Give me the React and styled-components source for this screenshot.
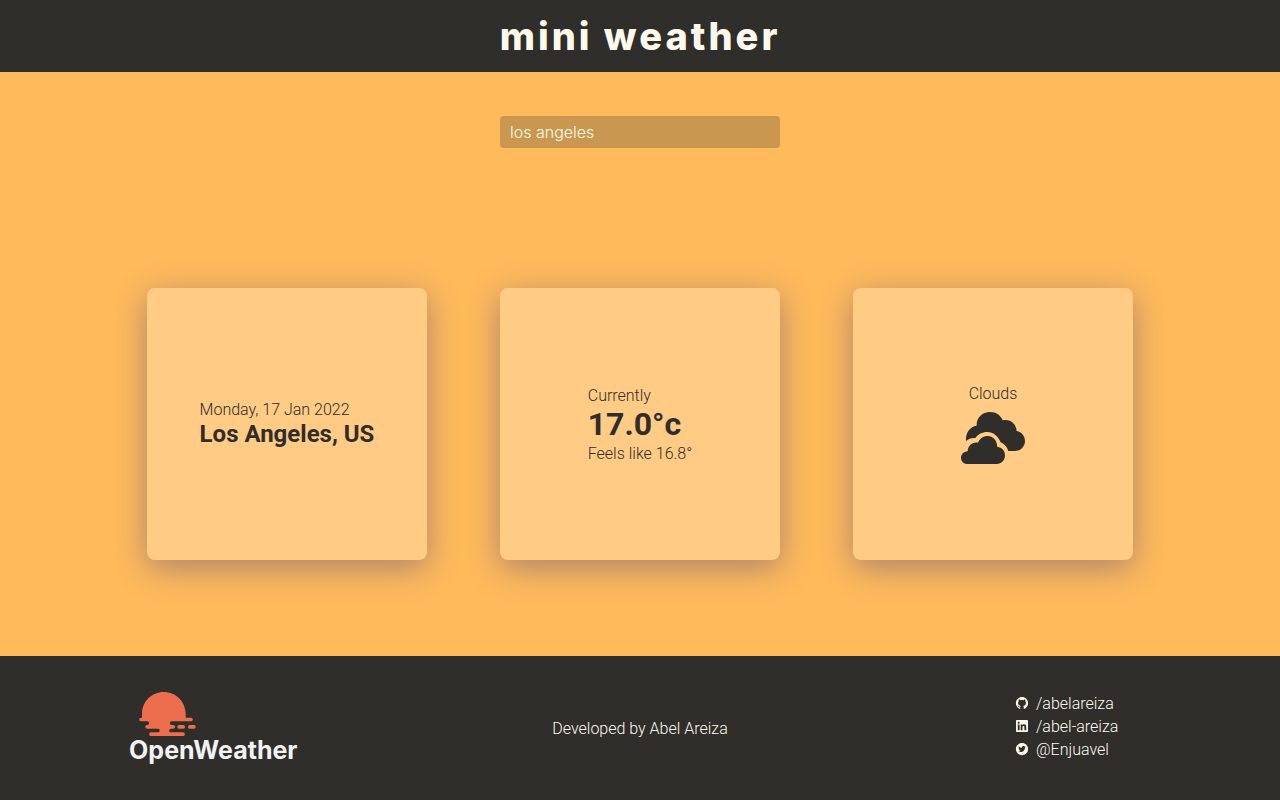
import React, { useState } from "react";
import styled, { createGlobalStyle } from "styled-components";
import { AiFillGithub, AiFillTwitterCircle } from "react-icons/ai";

const GlobalStyle = createGlobalStyle`
  * {
    box-sizing: border-box;
    margin: 0;
    padding: 0;
  }
  body {
    font-family: Roboto, "Liberation Sans", sans-serif;
    font-size: 16px;
    font-weight: 300;
    color: #2f2e2a;
    background: #ffba5c;
  }
`;

const Page = styled.div`
  display: flex;
  flex-direction: column;
  min-height: 100vh;
`;

const Header = styled.header`
  display: flex;
  align-items: center;
  justify-content: center;
  min-height: 72px;
  background: #2f2e2a;
`;

const Title = styled.h1`
  font-family: Inter, "Liberation Sans", sans-serif;
  font-size: 38px;
  font-weight: 800;
  line-height: 44px;
  letter-spacing: 3px;
  color: #fef9ec;
`;

const Main = styled.main`
  display: flex;
  flex: 1;
  flex-direction: column;
`;

const Search = styled.form`
  display: flex;
  align-items: center;
  justify-content: center;
  height: 120px;
`;

const SearchInput = styled.input`
  width: 280px;
  height: 32px;
  padding: 0 10px;
  border: 0;
  border-radius: 4px;
  outline: 0;
  font-family: Inter, "Liberation Sans", sans-serif;
  font-size: 16px;
  font-weight: 300;
  color: #fef9ec;
  background: #c9974f;
`;

const Cards = styled.section`
  display: flex;
  flex: 1;
  flex-wrap: wrap;
  align-items: center;
  justify-content: center;
  gap: 73px;
`;

const Card = styled.article`
  display: flex;
  align-items: center;
  justify-content: center;
  width: 280px;
  height: 272px;
  border-radius: 8px;
  background: rgba(255, 255, 255, 0.25);
  box-shadow: 0 8px 32px 0 rgba(31, 38, 135, 0.37);
`;

const CardBody = styled.div`
  display: flex;
  flex-direction: column;
  align-items: ${({ $centered }) => ($centered ? "center" : "flex-start")};
  gap: ${({ $centered }) => ($centered ? "9px" : "1px")};
`;

const Label = styled.p`
  line-height: 19px;
`;

const City = styled.h2`
  font-size: 24px;
  font-weight: 700;
  line-height: 28px;
`;

const Temperature = styled.h2`
  font-size: 32px;
  font-weight: 700;
  line-height: 37px;
`;

const Footer = styled.footer`
  display: grid;
  grid-template-columns: repeat(3, 1fr);
  align-items: center;
  justify-items: center;
  min-height: 144px;
  color: #fef9ec;
  background: #2f2e2a;
`;

const Logo = styled.a`
  display: flex;
  flex-direction: column;
  color: #f2f2f2;
  text-decoration: none;
`;

const LogoSun = styled.svg`
  width: 58px;
  height: 44px;
  margin-left: 10px;
`;

const LogoName = styled.span`
  font-family: Inter, "Liberation Sans", sans-serif;
  font-size: 25px;
  font-weight: 700;
  line-height: 28px;
`;

const Links = styled.ul`
  display: flex;
  flex-direction: column;
  list-style: none;
`;

const LinkItem = styled.li`
  padding-bottom: 4px;
`;

const ProfileLink = styled.a`
  display: flex;
  align-items: center;
  gap: 7px;
  line-height: 19px;
  color: inherit;
  text-decoration: none;
`;

const CloudsIcon = () => (
  <svg width="64" height="52" viewBox="0 0 192 156" fill="currentColor" aria-hidden="true">
    <path d="M15 87C13 64 26 44 47 41C46 17 64 0 87 0C106 0 119 10 125 25C148 20 166 36 167 57C182 60 192 72 192 87C192 104 179 117 162 117H142C138 105 131 96 119 91C112 73 98 60 79 60C63 60 51 67 43 78C32 77 23 80 15 87Z" />
    <path d="M19 156C8 156 0 148 0 137C0 127 8 119 20 118C20 102 34 89 51 92C56 80 67 72 80 72C96 72 108 85 109 105C123 105 132 116 132 130C132 145 121 156 107 156Z" />
  </svg>
);

const LinkedinIcon = ({ size, ...rest }) => (
  <svg width={size} height={size} viewBox="-2 -2 28 28" fill="currentColor" {...rest}>
    <path d="M20.447 20.452h-3.554v-5.569c0-1.328-.027-3.037-1.852-3.037-1.853 0-2.136 1.445-2.136 2.939v5.667H9.351V9h3.414v1.561h.046c.477-.9 1.637-1.85 3.37-1.85 3.601 0 4.267 2.37 4.267 5.455v6.286zM5.337 7.433c-1.144 0-2.063-.926-2.063-2.065 0-1.138.92-2.063 2.063-2.063 1.14 0 2.064.925 2.064 2.063 0 1.139-.925 2.065-2.064 2.065zm1.782 13.019H3.555V9h3.564v11.452zM22.225 0H1.771C.792 0 0 .774 0 1.729v20.542C0 23.227.792 24 1.771 24h20.451C23.2 24 24 23.227 24 22.271V1.729C24 .774 23.2 0 22.222 0h.003z" />
  </svg>
);

const profiles = [
  { name: "/abelareiza", href: "https://github.com/abelareiza", Icon: AiFillGithub },
  { name: "/abel-areiza", href: "https://www.linkedin.com/in/abel-areiza", Icon: LinkedinIcon },
  { name: "@Enjuavel", href: "https://twitter.com/Enjuavel", Icon: AiFillTwitterCircle },
];

export default function App() {
  const [query, setQuery] = useState("los angeles");

  return (
    <Page>
      <GlobalStyle />
      <Header>
        <Title>mini weather</Title>
      </Header>
      <Main>
        <Search onSubmit={(event) => event.preventDefault()}>
          <SearchInput
            type="text"
            aria-label="City"
            value={query}
            onChange={(event) => setQuery(event.target.value)}
          />
        </Search>
        <Cards>
          <Card>
            <CardBody>
              <Label>Monday, 17 Jan 2022</Label>
              <City>Los Angeles, US</City>
            </CardBody>
          </Card>
          <Card>
            <CardBody>
              <Label>Currently</Label>
              <Temperature>17.0°c</Temperature>
              <Label>Feels like 16.8°</Label>
            </CardBody>
          </Card>
          <Card>
            <CardBody $centered>
              <Label>Clouds</Label>
              <CloudsIcon />
            </CardBody>
          </Card>
        </Cards>
      </Main>
      <Footer>
        <Logo href="https://openweathermap.org">
          <LogoSun viewBox="0 0 174 132" fill="#ec6e4c" aria-hidden="true">
            <path d="M9 77V66C9 29 38 0 74 0C111 0 140 29 140 66V77H156A5.5 5.5 0 0 1 156 88H98C91 88 91 99 98 99H103A5.5 5.5 0 0 1 103 110H96C89 110 89 121 96 121H132A5.5 5.5 0 0 1 132 132H36A5.5 5.5 0 0 1 36 121H57C64 121 64 110 57 110H24A5.5 5.5 0 0 1 24 99H25C32 99 32 88 25 88H6A5.5 5.5 0 0 1 6 77Z" />
            <rect x="115" y="99" width="23" height="11" rx="5" />
            <rect x="147" y="99" width="23" height="11" rx="5" />
          </LogoSun>
          <LogoName>OpenWeather</LogoName>
        </Logo>
        <p>Developed by Abel Areiza</p>
        <Links>
          {profiles.map(({ name, href, Icon }) => (
            <LinkItem key={name}>
              <ProfileLink href={href}>
                <Icon size={14} aria-hidden="true" />
                {name}
              </ProfileLink>
            </LinkItem>
          ))}
        </Links>
      </Footer>
    </Page>
  );
}
